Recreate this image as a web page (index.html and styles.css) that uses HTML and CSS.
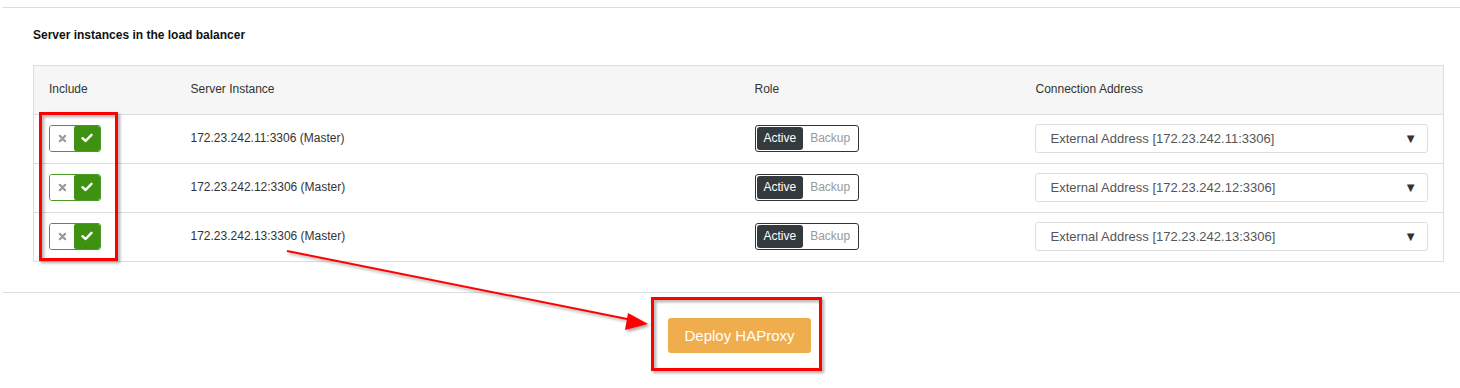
FILE: index.html
```html
<!DOCTYPE html>
<html lang="en">
<head>
    <meta charset="UTF-8">
    <title>Load Balancer</title>
    <link rel="stylesheet" href="styles.css">
</head>
<body>
    <div class="panel">
        <h3 class="title">Server instances in the load balancer</h3>
        <table class="servers">
            <colgroup>
                <col class="col-include">
                <col class="col-server">
                <col class="col-role">
                <col class="col-address">
            </colgroup>
            <thead>
                <tr>
                    <th>Include</th>
                    <th>Server Instance</th>
                    <th>Role</th>
                    <th>Connection Address</th>
                </tr>
            </thead>
            <tbody>
                <tr>
                    <td>
                        <div class="include-toggle">
                            <span class="off"><svg width="9" height="9" viewBox="0 0 10 10"><path d="M2 2L8 8M8 2L2 8" stroke="#999" stroke-width="2.4" stroke-linecap="round"/></svg></span>
                            <span class="on"><svg width="12" height="10" viewBox="0 0 12 10"><path d="M1.5 5.2L4.6 8L10.5 1.8" fill="none" stroke="#fff" stroke-width="2.4" stroke-linecap="round" stroke-linejoin="round"/></svg></span>
                        </div>
                    </td>
                    <td>172.23.242.11:3306 (Master)</td>
                    <td><div class="role-toggle"><span class="active">Active</span><span class="backup">Backup</span></div></td>
                    <td><div class="address-select"><span>External Address [172.23.242.11:3306]</span><span class="caret">&#9660;</span></div></td>
                </tr>
                <tr>
                    <td>
                        <div class="include-toggle">
                            <span class="off"><svg width="9" height="9" viewBox="0 0 10 10"><path d="M2 2L8 8M8 2L2 8" stroke="#999" stroke-width="2.4" stroke-linecap="round"/></svg></span>
                            <span class="on"><svg width="12" height="10" viewBox="0 0 12 10"><path d="M1.5 5.2L4.6 8L10.5 1.8" fill="none" stroke="#fff" stroke-width="2.4" stroke-linecap="round" stroke-linejoin="round"/></svg></span>
                        </div>
                    </td>
                    <td>172.23.242.12:3306 (Master)</td>
                    <td><div class="role-toggle"><span class="active">Active</span><span class="backup">Backup</span></div></td>
                    <td><div class="address-select"><span>External Address [172.23.242.12:3306]</span><span class="caret">&#9660;</span></div></td>
                </tr>
                <tr>
                    <td>
                        <div class="include-toggle">
                            <span class="off"><svg width="9" height="9" viewBox="0 0 10 10"><path d="M2 2L8 8M8 2L2 8" stroke="#999" stroke-width="2.4" stroke-linecap="round"/></svg></span>
                            <span class="on"><svg width="12" height="10" viewBox="0 0 12 10"><path d="M1.5 5.2L4.6 8L10.5 1.8" fill="none" stroke="#fff" stroke-width="2.4" stroke-linecap="round" stroke-linejoin="round"/></svg></span>
                        </div>
                    </td>
                    <td>172.23.242.13:3306 (Master)</td>
                    <td><div class="role-toggle"><span class="active">Active</span><span class="backup">Backup</span></div></td>
                    <td><div class="address-select"><span>External Address [172.23.242.13:3306]</span><span class="caret">&#9660;</span></div></td>
                </tr>
            </tbody>
        </table>
    </div>
    <div class="actions">
        <button class="deploy">Deploy HAProxy</button>
    </div>

    <!-- red annotations drawn over the screenshot -->
    <svg class="annotations" width="1460" height="388" viewBox="0 0 1460 388">
        <defs>
            <filter id="shadow" x="-10%" y="-10%" width="130%" height="130%">
                <feDropShadow dx="2" dy="2" stdDeviation="1.5" flood-color="#000" flood-opacity="0.35"/>
            </filter>
        </defs>
        <g filter="url(#shadow)" fill="none" stroke="#f00" stroke-width="3">
            <rect x="40.5" y="113.5" width="76" height="146"/>
            <rect x="652.5" y="298.5" width="168" height="71"/>
            <line x1="287" y1="251" x2="632" y2="320" stroke-width="2"/>
            <polygon points="648,324 628,313 625,330" fill="#f00" stroke="none"/>
        </g>
    </svg>
</body>
</html>
```

FILE: styles.css
```css
body {
    font-family: 'Liberation Sans', Arial, sans-serif;
    font-size: 12px;
    color: #333;
    background-color: #fff;
    margin: 0;
    padding: 0;
    position: relative;
    width: 1460px;
    height: 388px;
    overflow: hidden;
}
.panel {
    margin: 7px 0 0 3px;
    border-top: 1px solid #ddd;
    border-bottom: 1px solid #ddd;
    padding: 20px 17px 30px 30px;
}
.title {
    font-size: 12px;
    font-weight: bold;
    line-height: 14px;
    margin: 0 0 23px 0;
    color: #111;
}
.servers {
    width: 1410px;
    border-collapse: collapse;
    table-layout: fixed;
    border: 1px solid #ddd;
}
.col-include { width: 141px; }
.col-server { width: 564px; }
.col-role { width: 281px; }
.col-address { width: 424px; }
th, td {
    text-align: left;
    font-weight: normal;
    padding: 0 15px 2px 16px;
    height: 46px;
    border-bottom: 1px solid #ddd;
    vertical-align: middle;
}
th:first-child, td:first-child {
    padding-left: 15px;
}
th {
    background-color: #f5f6f5;
    color: #333;
}
.include-toggle {
    display: flex;
    width: 50px;
    height: 25px;
    border: 1px solid #4a9a2a;
    border-radius: 3px;
    overflow: hidden;
}
.include-toggle .off,
.include-toggle .on {
    display: flex;
    align-items: center;
    justify-content: center;
}
.include-toggle .off {
    width: 24px;
    background: #fff;
}
.include-toggle .on {
    flex: 1;
    background: #3f9112;
    border-radius: 2px;
}
.role-toggle {
    display: flex;
    width: 102px;
    height: 25px;
    border: 1px solid #333;
    border-radius: 3px;
    overflow: hidden;
}
.role-toggle span {
    display: flex;
    align-items: center;
}
.role-toggle .active {
    background: #343a3d;
    color: #fff;
    padding: 0 7px;
    border-radius: 3px;
    margin: 1px;
}
.role-toggle .backup {
    color: #999;
    padding: 0 6px;
}
.address-select {
    display: flex;
    align-items: center;
    justify-content: space-between;
    height: 27px;
    margin-left: -1px;
    border: 1px solid #ddd;
    border-radius: 3px;
    padding: 0 10px 0 15px;
    font-size: 13px;
    color: #555;
}
.address-select .caret {
    font-size: 13px;
    color: #333;
}
.actions {
    display: flex;
    justify-content: center;
    padding: 25px 0 0 19px;
}
.deploy {
    font-family: 'Liberation Sans', Arial, sans-serif;
    font-size: 15px;
    line-height: 21px;
    background-color: #f0ad4e;
    color: #fff;
    border: none;
    border-radius: 3px;
    padding: 7px 16px;
    cursor: pointer;
}
.annotations {
    position: absolute;
    top: 0;
    left: 0;
    pointer-events: none;
}
```
